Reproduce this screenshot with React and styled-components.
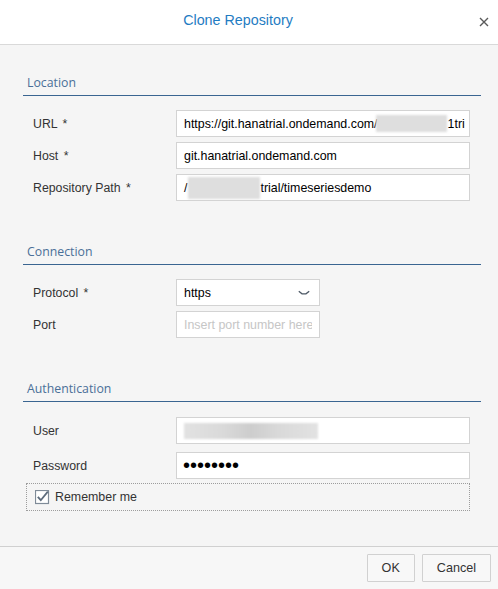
import React from "react";
import styled, { createGlobalStyle } from "styled-components";

const Global = createGlobalStyle`
  html, body { margin: 0; padding: 0; background: #ffffff; }
  body { font-family: "Liberation Sans", Arial, sans-serif; }
  * { box-sizing: border-box; }
`;

const Dialog = styled.div`
  width: 498px;
  height: 589px;
  display: flex;
  flex-direction: column;
  background: #ffffff;
  overflow: hidden;
`;

const Header = styled.header`
  height: 45px;
  flex: none;
  display: flex;
  align-items: center;
  border-bottom: 1px solid #d9d9d9;
  background: #ffffff;
  padding: 0 4px 4px 0;
`;

const Title = styled.h1`
  flex: 1;
  margin: 0;
  text-align: center;
  font-family: "Liberation Sans", Arial, sans-serif;
  font-weight: normal;
  font-size: 14.3px;
  color: #1f7cc2;
  padding-left: 2px;
`;

const CloseButton = styled.button`
  width: 20px;
  height: 20px;
  margin-top: 4px;
  padding: 0;
  border: none;
  background: transparent;
  display: flex;
  align-items: center;
  justify-content: center;
`;

const Body = styled.main`
  flex: 1;
  background: #f5f5f5;
  padding: 27px 17px 0 23px;
  display: flex;
  flex-direction: column;
`;

const Section = styled.section`
  margin-top: ${(p) => (p.$first ? 0 : 40)}px;
  display: flex;
  flex-direction: column;
`;

const SectionTitle = styled.h2`
  margin: 0;
  padding: 1px 4px 2px;
  font-family: "Open Sans", "Liberation Sans", sans-serif;
  font-weight: normal;
  font-size: 12.3px;
  line-height: 20px;
  color: #4a6f98;
  border-bottom: 1px solid #3a6591;
`;

const Rows = styled.div`
  margin-top: ${(p) => p.$top || 14}px;
  display: flex;
  flex-direction: column;
  gap: ${(p) => p.$gap || 5}px;
`;

const Row = styled.div`
  display: flex;
  align-items: center;
  padding: 0 11px 0 10px;
`;

const Label = styled.label`
  width: 143px;
  flex: none;
  font-size: 12.3px;
  color: #333333;
  white-space: nowrap;
`;

const Req = styled.span`
  margin-left: 2px;
`;

const fieldBase = `
  height: 27px;
  border: 1px solid #d3d3d3;
  background: #ffffff;
  padding: 0 7px;
  font-family: "Liberation Sans", Arial, sans-serif;
  font-size: 12.4px;
  color: #000000;
`;

const Field = styled.div`
  ${fieldBase}
  width: ${(p) => (p.$w ? `${p.$w}px` : "auto")};
  flex: ${(p) => (p.$w ? "none" : "1")};
  display: flex;
  align-items: center;
  white-space: nowrap;
  overflow: hidden;
`;

const Input = styled.input`
  ${fieldBase}
  width: ${(p) => (p.$w ? `${p.$w}px` : "auto")};
  flex: ${(p) => (p.$w ? "none" : "1")};
  min-width: 0;
  outline: none;
  &::placeholder { color: #c6c6c6; }
`;

const PasswordInput = styled(Input)`
  font-size: 20px;
  letter-spacing: 0px;
  padding-left: 6px;
`;

const Blur = styled.span`
  display: inline-block;
  flex: none;
  width: ${(p) => p.$w}px;
  height: ${(p) => p.$h || 17}px;
  background: ${(p) =>
    p.$dark
      ? "linear-gradient(90deg, #e2e2e2 0%, #d9d9d9 30%, #cdcdcd 50%, #d9d9d9 70%, #e2e2e2 100%)"
      : "#dedede"};
  filter: blur(1.2px);
  margin: 0 ${(p) => p.$mr || 0}px 0 ${(p) => p.$ml || 0}px;
`;

const Text = styled.span`
  flex: none;
`;

const Select = styled(Field)`
  justify-content: space-between;
  padding-right: 9px;
`;

const CheckRow = styled.label`
  margin: 4px 11px 0 3px;
  height: 28px;
  border: 1px dotted #9d9d9d;
  display: flex;
  align-items: center;
  gap: 5px;
  padding-left: 8px;
  font-size: 12.4px;
  color: #333333;
`;

const Footer = styled.footer`
  height: 43px;
  flex: none;
  border-top: 1px solid #d0d0d0;
  background: #f7f7f7;
  display: flex;
  justify-content: flex-end;
  align-items: center;
  gap: 7px;
  padding: 0 7px;
`;

const Button = styled.button`
  height: 28px;
  padding: 0 14px;
  border: 1px solid #d1d1d1;
  border-radius: 1px;
  background: #f8f8f8;
  font-family: "Liberation Sans", Arial, sans-serif;
  font-size: 12.6px;
  color: #333333;
`;

const Chevron = () => (
  <svg width="12" height="6" viewBox="0 0 12 6">
    <path d="M0.8 1.2 L4 3.8 L8 3.8 L11.2 1.2" fill="none" stroke="#4d5966" strokeWidth="1.3" />
  </svg>
);

const CloseIcon = () => (
  <svg width="10" height="10" viewBox="0 0 10 10">
    <path d="M1 1 L9 9 M9 1 L1 9" stroke="#5a5a5a" strokeWidth="1.4" />
  </svg>
);

const CheckIcon = () => (
  <svg width="15" height="15" viewBox="0 0 15 15">
    <rect x="0.5" y="0.5" width="13" height="13" fill="#ffffff" stroke="#7f8b98" strokeWidth="1.2" />
    <path d="M2.8 6.8 L5.8 10.2 L12.8 1.6" fill="none" stroke="#5d6c7c" strokeWidth="1.8" />
  </svg>
);

export default function App() {
  return (
    <>
      <Global />
      <Dialog>
        <Header>
          <Title>Clone Repository</Title>
          <CloseButton aria-label="Close">
            <CloseIcon />
          </CloseButton>
        </Header>
        <Body>
          <Section $first>
            <SectionTitle>Location</SectionTitle>
            <Rows>
              <Row>
                <Label>URL <Req>*</Req></Label>
                <Field>
                  <Text>https://git.hanatrial.ondemand.com/</Text>
                  <Blur $w={71} $ml={-2} $mr={1} />
                  <Text>1tri</Text>
                </Field>
              </Row>
              <Row>
                <Label>Host <Req>*</Req></Label>
                <Input defaultValue="git.hanatrial.ondemand.com" />
              </Row>
              <Row>
                <Label>Repository Path <Req>*</Req></Label>
                <Field>
                  <Text>/</Text>
                  <Blur $w={72} $h={22} $ml={1} />
                  <Text>trial/timeseriesdemo</Text>
                </Field>
              </Row>
            </Rows>
          </Section>

          <Section>
            <SectionTitle>Connection</SectionTitle>
            <Rows>
              <Row>
                <Label>Protocol <Req>*</Req></Label>
                <Select $w={144}>
                  <Text>https</Text>
                  <Chevron />
                </Select>
              </Row>
              <Row>
                <Label>Port</Label>
                <Input $w={144} placeholder="Insert port number here" />
              </Row>
            </Rows>
          </Section>

          <Section>
            <SectionTitle>Authentication</SectionTitle>
            <Rows $gap={8} $top={15}>
              <Row>
                <Label>User</Label>
                <Field>
                  <Blur $w={134} $h={16} $dark />
                </Field>
              </Row>
              <Row>
                <Label>Password</Label>
                <PasswordInput type="password" defaultValue="password" />
              </Row>
            </Rows>
            <CheckRow>
              <CheckIcon />
              <span>Remember me</span>
            </CheckRow>
          </Section>
        </Body>
        <Footer>
          <Button>OK</Button>
          <Button>Cancel</Button>
        </Footer>
      </Dialog>
    </>
  );
}
